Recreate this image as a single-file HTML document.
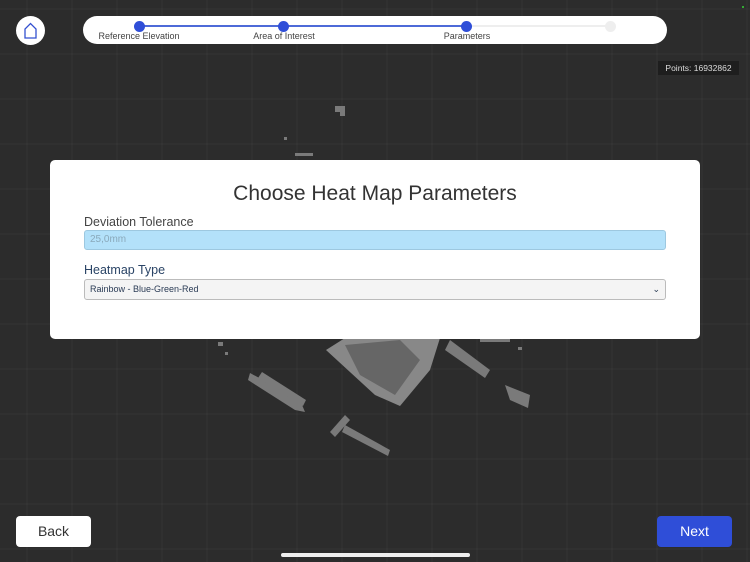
<!DOCTYPE html>
<html><head><meta charset="utf-8"><style>
*{margin:0;padding:0;box-sizing:border-box}
body{width:750px;height:562px;overflow:hidden;background:#2c2c2c;font-family:"Liberation Sans",sans-serif;position:relative;
background-image:linear-gradient(90deg,rgba(255,255,255,0.018) 2px,transparent 2px),linear-gradient(0deg,rgba(255,255,255,0.018) 2px,transparent 2px);
background-size:45px 45px;background-position:26px 10px}
.abs{position:absolute}
.home{left:16px;top:16px;width:29px;height:29px;border-radius:50%;background:#fff}
.bar{left:83px;top:16px;width:584px;height:28px;border-radius:14px;background:#fff}
.dot{width:11px;height:11px;border-radius:50%;background:#2f4ed8;top:5px}
.lbl{font-size:9px;color:#444;top:15px;transform:translateX(-50%);white-space:nowrap}
.pts{left:658px;top:61px;width:81px;height:14px;background:#1e1e1e;color:#ddd;font-size:8.5px;line-height:14px;text-align:center}
.card{left:50px;top:160px;width:650px;height:179px;background:#fff;border-radius:5px}
h1{position:absolute;left:0;width:650px;top:22px;text-align:center;font-weight:normal;font-size:21px;color:#333}
.l{font-size:12.5px;color:#444;left:34px}
.inp{left:34px;top:70px;width:582px;height:20px;background:#b3e1fa;border:1px solid #9dc8e0;border-radius:3px;font-size:10px;color:#8aa9bb;padding-left:5px;line-height:18px}
.sel{left:34px;top:119px;width:582px;height:21px;background:#f4f4f4;border:1px solid #bbb;border-radius:3px;font-size:9px;color:#2a3b55;padding-left:5px;line-height:19px}
.btn{top:516px;height:31px;border-radius:4px;font-size:14px;text-align:center;line-height:31px}
</style></head><body>
<svg class="abs" style="left:0;top:0" width="750" height="562">
<g fill="#7a7a7a">
<rect x="335" y="106" width="10" height="6"/><rect x="340" y="112" width="5" height="4"/>
<rect x="295" y="153" width="18" height="3"/><rect x="284" y="137" width="3" height="3"/>
<polygon points="326,350 345,338 440,338 430,370 400,406 375,395" fill="#888"/>
<polygon points="345,345 400,340 420,360 395,395 360,375" fill="#666"/>
<polygon points="450,340 490,370 485,378 445,350"/>
<polygon points="250,373 300,400 305,412 295,410 248,380"/>
<polygon points="262,372 306,400 303,406 258,378"/>
<polygon points="330,432 345,415 350,420 335,437"/>
<polygon points="345,425 390,450 388,456 342,432"/>
<polygon points="505,385 530,395 528,408 510,400"/>
<rect x="218" y="342" width="5" height="4"/><rect x="225" y="352" width="3" height="3"/>
<rect x="480" y="338" width="30" height="4"/><rect x="518" y="347" width="4" height="3"/>
</g>
</svg>
<div class="abs home"><svg width="29" height="29"><path d="M9 22V13L14.5 7.5L20 13V22Z" fill="none" stroke="#3350d0" stroke-width="1.3"/></svg></div>
<div class="abs bar">
<div class="abs" style="left:56px;top:9px;width:327px;height:2px;background:#4e6ad8"></div>
<div class="abs" style="left:383px;top:9px;width:145px;height:2px;background:#eee"></div>
<div class="abs dot" style="left:51px"></div><div class="abs dot" style="left:195px"></div><div class="abs dot" style="left:378px"></div>
<div class="abs dot" style="left:522px;background:#eee"></div>
<div class="abs lbl" style="left:56px">Reference Elevation</div>
<div class="abs lbl" style="left:201px">Area of Interest</div>
<div class="abs lbl" style="left:384px">Parameters</div>
</div>
<div class="abs" style="left:742px;top:6px;width:2px;height:2px;background:#3a3"></div>
<div class="abs pts">Points: 16932862</div>
<div class="abs card">
<h1>Choose Heat Map Parameters</h1>
<div class="abs l" style="top:55px">Deviation Tolerance</div>
<div class="abs inp">25,0mm</div>
<div class="abs l" style="top:103px;color:#2a4466">Heatmap Type</div>
<div class="abs sel">Rainbow - Blue-Green-Red<span style="position:absolute;right:5px;top:0;font-size:9px">&#8964;</span></div>
</div>
<div class="abs btn" style="left:16px;width:75px;background:#fff;color:#333">Back</div>
<div class="abs btn" style="left:657px;width:75px;background:#2f4ed8;color:#fff">Next</div>
<div class="abs" style="left:281px;top:553px;width:189px;height:4px;border-radius:2px;background:#eee"></div>
</body></html>
